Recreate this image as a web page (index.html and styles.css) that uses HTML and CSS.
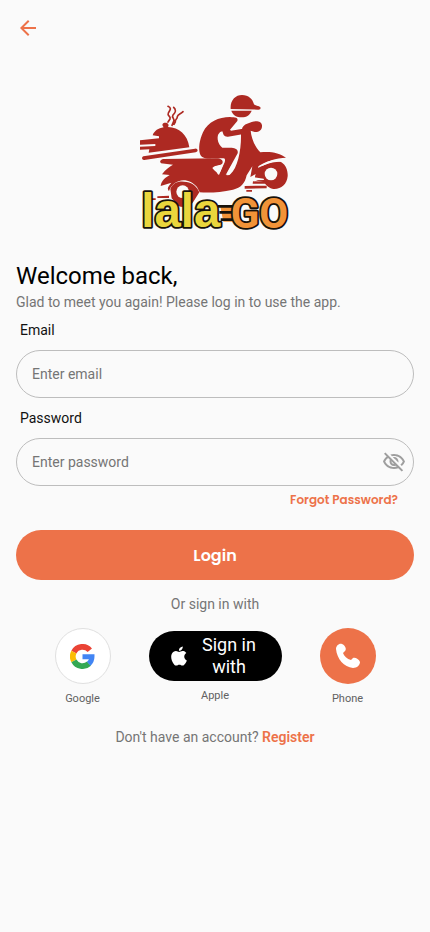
FILE: index.html
```html
<!DOCTYPE html>
<html lang="en">
<head>
    <meta charset="UTF-8">
    <meta name="viewport" content="width=device-width, initial-scale=1.0">
    <title>Login</title>
    <link rel="stylesheet" href="styles.css">
</head>
<body>
    <header class="topbar">
        <button class="icon-btn" type="button" aria-label="Back">
            <svg width="24" height="24" viewBox="0 0 24 24" fill="currentColor"><path d="M20 11H7.83l5.59-5.59L12 4l-8 8 8 8 1.41-1.41L7.83 13H20v-2z"/></svg>
        </button>
    </header>

    <main class="container">
        <svg class="logo" viewBox="0 0 510 450" role="img" aria-label="lalaGO">
            <g fill="#ad2922">
                <!-- rider -->
                <path d="M302 72C300 46 316 30 336 30C356 30 368 42 372 58C378 64 391 62 392 69Q392 74 385 74L302 72Z"/>
                <path d="M304 77H365C360 90 350 97 335 97C319 97 308 90 304 77Z"/>
                <path d="M322 108C326 98 316 97 300 96C266 96 234 110 219 142C208 166 205 191 210 207C215 220 230 222 245 220H280C286 220 286 226 284 232L266 271L285 274L323 205C326 194 316 189 305 188H277C264 178 260 160 265 148Q270 139 277 139L281 150Q285 156 294 155L337 148L339 131L303 137L300 134Z"/>
                <!-- scooter -->
                <path d="M337 128C343 117 355 115 365 111C378 106 395 108 396 121C397 135 386 142 374 141L362 137C364 158 374 186 391 202C421 198 449 204 468 218C439 218 408 229 383 247C408 239 435 228 453 231C469 240 474 259 473 274C471 298 453 313 431 312C419 311 408 302 403 292L388 289C373 287 373 279 377 267L361 276L367 244L350 271C345 295 333 309 309 314C273 322 240 324 209 322L201 306C187 290 164 281 146 289C129 294 120 309 117 319C108 309 118 301 124 293L92 303C94 286 107 277 119 270L96 268C105 254 118 246 129 239L93 235C87 229 92 223 101 222L258 220C275 219 282 229 276 237C266 243 253 241 247 249C258 266 283 272 301 268C323 249 334 196 333 148Z"/>
                <path d="M121 312C128 292 148 286 170 291C189 293 201 306 208 322L190 350C184 362 166 369 146 364L125 340Z"/>
                <!-- covered dish -->
                <path d="M56 203L58 193L30 194V185L76 183V177L30 179V166L87 160V154L68 151C73 137 85 130 101 127C94 118 98 113 106 113C115 113 118 120 114 126C147 127 173 149 178 187Z"/>
                <path d="M40 214L195 191Q202 190 203 196Q203 201 197 202L43 225Q37 226 36 220Q36 215 40 214Z"/>
                <!-- speed lines -->
                <path d="M369 289L421 290V296L368 296ZM344 303L410 302V310L344 311ZM349 315H366V320H349ZM82 334L117 332V339H82ZM66 340H77V345H66Z"/>
            </g>
            <g fill="none" stroke="#ad2922" stroke-width="5" stroke-linecap="round">
                <path d="M114 64C127 70 119 76 115 84C110 94 124 93 120 102L114 111M131 67C142 77 134 84 129 90C123 99 136 100 131 109L126 121M159 80C153 87 143 87 142 95C142 103 134 103 136 111L132 118"/>
            </g>
            <g fill="#fafafa">
                <circle cx="423" cy="267" r="19"/>
                <circle cx="158" cy="320" r="19"/>
                <path d="M258 244L280 238L267 270Q256 263 258 244ZM302 245L311 238L299 270L290 271ZM365 276L401 281L402 285L377 286ZM386 243C405 230 424 224 447 225L453 230C428 226 407 237 384 249Z"/>
            </g>
            <path class="stripe-fill" d="M270 360H320V410H280Z"/>
            <path class="stripes" d="M264 364H322M268 382H322M272 404H322"/>
            <text class="logo-lala" x="34" y="427">lala</text>
            <text class="logo-go" x="302" y="428">GO</text>
        </svg>

        <h1>Welcome back,</h1>
        <p class="subtitle">Glad to meet you again! Please log in to use the app.</p>

        <form class="login-form">
            <label for="email">Email</label>
            <div class="field">
                <input type="email" id="email" placeholder="Enter email">
            </div>

            <label for="password">Password</label>
            <div class="field">
                <input type="password" id="password" placeholder="Enter password">
                <button class="icon-btn toggle" type="button" aria-label="Show password">
                    <svg width="24" height="24" viewBox="0 0 24 24" fill="currentColor"><path d="M12 6c3.79 0 7.17 2.13 8.82 5.5-.59 1.22-1.42 2.27-2.41 3.12l1.41 1.41c1.39-1.23 2.49-2.77 3.18-4.53C21.27 7.11 17 4 12 4c-1.27 0-2.49.2-3.64.57l1.65 1.65C10.66 6.09 11.32 6 12 6zm-1.07 1.14L13 9.21c.57.25 1.03.71 1.28 1.28l2.07 2.07c.08-.34.14-.7.14-1.07C16.5 9.01 14.48 7 12 7c-.37 0-.72.05-1.07.14zM2.01 3.87l2.68 2.68C3.06 7.83 1.77 9.53 1 11.5 2.73 15.89 7 19 12 19c1.52 0 2.98-.29 4.32-.82l3.42 3.42 1.41-1.41L3.42 2.45 2.01 3.87zm7.5 7.5l2.61 2.61c-.04.01-.08.02-.12.02-1.38 0-2.5-1.12-2.5-2.5 0-.05.01-.08.01-.13zm-3.4-3.4l1.75 1.75c-.23.55-.36 1.15-.36 1.78 0 2.48 2.02 4.5 4.5 4.5.63 0 1.23-.13 1.77-.36l.98.98c-.88.24-1.8.38-2.75.38-3.79 0-7.17-2.13-8.82-5.5.7-1.43 1.72-2.61 2.93-3.53z"/></svg>
                </button>
            </div>

            <a class="forgot" href="#">Forgot Password?</a>
            <button class="login-btn" type="submit">Login</button>
        </form>

        <p class="divider">Or sign in with</p>

        <div class="socials">
            <div class="social">
                <button class="round google" type="button" aria-labelledby="google-label">
                    <svg width="25" height="25" viewBox="0 0 48 48" fill="none" stroke-width="11">
                        <path stroke="#ea4335" d="M7.500 15.500A18.500 18.500 0 0 1 38 12"/>
                        <path stroke="#fbbc05" d="M7.500 32.500A18.500 18.500 0 0 1 7.500 15.500"/>
                        <path stroke="#34a853" d="M36.500 37.500A18.500 18.500 0 0 1 7.500 32.500"/>
                        <path stroke="#4285f4" d="M24 24.500H42A18.500 18.500 0 0 1 36 38" stroke-width="10"/>
                    </svg>
                </button>
                <span id="google-label">Google</span>
            </div>
            <div class="social">
                <button class="apple" type="button">
                    <svg width="16" height="20" viewBox="2 0 20 24" fill="currentColor"><path d="M12.152 6.896c-.948 0-2.415-1.078-3.96-1.04-2.04.027-3.91 1.183-4.961 3.014-2.117 3.675-.546 9.103 1.519 12.09 1.013 1.454 2.208 3.09 3.792 3.039 1.52-.065 2.09-.987 3.935-.987 1.831 0 2.35.987 3.96.948 1.637-.026 2.676-1.48 3.676-2.948 1.156-1.688 1.636-3.325 1.662-3.415-.039-.013-3.182-1.221-3.22-4.857-.026-3.04 2.48-4.494 2.597-4.559-1.429-2.09-3.623-2.324-4.39-2.376-2-.156-3.675 1.09-4.61 1.09zM15.53 3.83c.843-1.012 1.4-2.427 1.245-3.83-1.207.052-2.662.805-3.532 1.818-.78.896-1.454 2.338-1.273 3.714 1.338.104 2.715-.688 3.559-1.701"/></svg>
                    <span>Sign in with</span>
                </button>
                <span>Apple</span>
            </div>
            <div class="social">
                <button class="round phone" type="button" aria-labelledby="phone-label">
                    <svg width="26" height="26" viewBox="0 0 26 26" fill="currentColor"><path d="M1 6C1 3 4 0 7 1C10 2 12 6 10 8L8 10C9 13 12 16 16 17L18 15C20 14 24 16 25 19C25 22 22 25 18 25C9 24 2 16 1 6Z"/></svg>
                </button>
                <span id="phone-label">Phone</span>
            </div>
        </div>

        <p class="register">Don't have an account? <a href="#">Register</a></p>
    </main>
</body>
</html>
```
FILE: styles.css
```css
* {
    box-sizing: border-box;
}
body {
    margin: 0;
    font-family: Roboto, sans-serif;
    font-size: 14px;
    line-height: 20px;
    color: #757575;
    background-color: #fafafa;
}
button {
    font-family: inherit;
    border: none;
    cursor: pointer;
}
a {
    color: #ed7249;
    text-decoration: none;
}
.topbar {
    display: flex;
    align-items: center;
    height: 56px;
    padding: 0 16px;
}
.icon-btn {
    display: flex;
    padding: 0;
    background: none;
    color: #ed7249;
}
.container {
    display: flex;
    flex-direction: column;
    padding: 29px 16px;
}
.logo {
    width: 170px;
    align-self: center;
    overflow: visible;
}
.logo-lala,
.logo-go {
    font-weight: bold;
    stroke: #17120a;
    stroke-width: 11px;
    stroke-linejoin: round;
    paint-order: stroke;
}
.logo-lala {
    font-family: "Liberation Sans", sans-serif;
    font-size: 142px;
    fill: #ead63c;
}
.logo-go {
    font-family: Roboto, sans-serif;
    font-size: 126px;
    fill: #f19338;
}
.stripes {
    fill: none;
    stroke: #17120a;
    stroke-width: 8px;
}
.stripe-fill {
    fill: #f19338;
}
h1 {
    margin: 25px 0 0;
    font-size: 24px;
    line-height: 32px;
    font-weight: 400;
    color: #000;
}
p {
    margin: 0;
}
.login-form {
    display: flex;
    flex-direction: column;
}
.login-form label {
    margin: 8px 4px 10px;
    color: #111;
}
.field {
    display: flex;
    align-items: center;
    height: 48px;
    margin-bottom: 2px;
    padding: 0 7px 0 15px;
    border: 1px solid #bdbdbd;
    border-radius: 24px;
}
.field input {
    flex: 1;
    min-width: 0;
    padding: 0;
    border: none;
    outline: none;
    background: none;
    font: inherit;
    color: #111;
}
.field input::placeholder {
    color: #757575;
    opacity: 1;
}
.toggle {
    color: #9e9e9e;
}
.forgot {
    align-self: flex-end;
    margin: 2px 16px 20px;
    font-family: Poppins, Lato, sans-serif;
    font-size: 12px;
    font-weight: 600;
}
.login-btn {
    height: 50px;
    border-radius: 25px;
    background-color: #ed7249;
    color: white;
    font-family: Poppins, Lato, sans-serif;
    font-size: 16px;
    font-weight: 600;
}
.divider {
    margin: 14px 0;
    text-align: center;
}
.socials {
    display: flex;
    justify-content: center;
    align-items: center;
    gap: 38px;
}
.social {
    display: flex;
    flex-direction: column;
    align-items: center;
    gap: 5px;
    font-size: 11px;
    color: #616161;
}
.round {
    display: flex;
    align-items: center;
    justify-content: center;
    width: 56px;
    height: 56px;
    padding: 0;
    border-radius: 50%;
}
.google {
    background-color: white;
    border: 1px solid #e0e0e0;
}
.phone {
    background-color: #ed7249;
    color: white;
}
.apple {
    display: flex;
    align-items: center;
    width: 133px;
    height: 50px;
    padding: 0 16px 0 22px;
    gap: 6px;
    border-radius: 25px;
    background-color: #000;
    color: white;
    font-size: 18px;
    line-height: 22px;
}
.apple svg {
    flex: none;
}
.apple span {
    flex: 1;
}
.register {
    margin-top: 18px;
    text-align: center;
}
.register a {
    font-weight: 600;
}
```
